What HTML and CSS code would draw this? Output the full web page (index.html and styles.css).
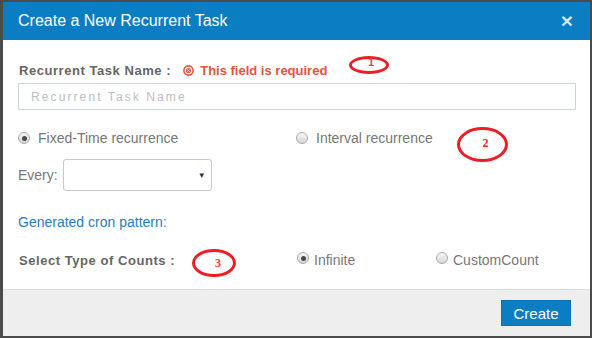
FILE: index.html
```html
<!DOCTYPE html>
<html lang="en">
<head>
    <meta charset="UTF-8">
    <meta name="viewport" content="width=device-width, initial-scale=1.0">
    <title>Create a New Recurrent Task</title>
    <link rel="stylesheet" href="styles.css">
</head>
<body>
    <div class="modal">
        <div class="modal-header">
            <span class="modal-title">Create a New Recurrent Task</span>
            <span class="close">&times;</span>
        </div>
        <div class="modal-body">
            <div class="name-row">
                <label class="bold-label">Recurrent Task Name :</label>
                <span class="error">
                    <svg width="11" height="11" viewBox="0 0 11 11">
                        <circle cx="5.5" cy="5.5" r="4.6" fill="none" stroke="#e5533f" stroke-width="1.6"/>
                        <circle cx="5.5" cy="5.5" r="2.6" fill="#e5533f"/>
                        <path d="M4.4 4.4 L6.6 6.6 M6.6 4.4 L4.4 6.6" stroke="#fff" stroke-width="0.9"/>
                    </svg>
                    This field is required
                </span>
            </div>
            <input type="text" class="text-input" placeholder="Recurrent Task Name">
            <div class="two-col radio-row">
                <div class="radio"><span class="dot checked"></span>Fixed-Time recurrence</div>
                <div class="radio"><span class="dot"></span>Interval recurrence</div>
            </div>
            <div class="every-row">
                <span class="plain-label">Every:</span>
                <div class="select"><span class="arrow">&#9660;</span></div>
            </div>
            <div class="cron">Generated cron pattern:</div>
            <div class="two-col counts-row">
                <label class="bold-label">Select Type of Counts :</label>
                <div class="count-options">
                    <div class="radio small"><span class="dot checked"></span>Infinite</div>
                    <div class="radio small"><span class="dot"></span>CustomCount</div>
                </div>
            </div>
        </div>
        <div class="modal-footer">
            <button class="btn-create">Create</button>
        </div>
    </div>

    <!-- annotations drawn over the screenshot -->
    <div class="mark mark-1"><span class="num n1">1</span></div>
    <div class="mark mark-2"><span class="num n2">2</span></div>
    <div class="mark mark-3"><span class="num n3">3</span></div>
</body>
</html>
```

FILE: styles.css
```css
body {
    margin: 0;
    background-color: #4b4b4b;
    font-family: "Liberation Sans", Arial, sans-serif;
    width: 592px;
    height: 338px;
    overflow: hidden;
}
.modal {
    margin: 2px 2px 0 3px;
    width: 587px;
    height: 334px;
    background-color: #fff;
    display: flex;
    flex-direction: column;
}
.modal-header {
    height: 38px;
    background-color: #0b7ec3;
    display: flex;
    align-items: center;
    justify-content: space-between;
    padding: 0 17px 0 15px;
}
.modal-title {
    color: #fff;
    font-size: 16px;
}
.close {
    color: rgba(255, 255, 255, 0.82);
    font-size: 21px;
    font-weight: bold;
    line-height: 1;
    margin-top: -2px;
}
.modal-body {
    flex: 1;
    padding: 22px 14px 0 16px;
}
.name-row {
    display: flex;
    align-items: center;
    height: 16px;
}
.bold-label {
    font-size: 13px;
    font-weight: bold;
    color: #666;
    letter-spacing: 0.55px;
}
.error {
    margin-left: 12px;
    color: #e5533f;
    font-size: 13px;
    font-weight: bold;
    display: flex;
    align-items: center;
    gap: 6px;
}
.text-input {
    display: block;
    box-sizing: border-box;
    margin-top: 5px;
    margin-left: -1px;
    width: 558px;
    height: 27px;
    border: 1px solid #cdd6de;
    padding: 0 12px;
    font-family: inherit;
    font-size: 12px;
    letter-spacing: 2.1px;
}
.text-input::placeholder {
    color: #bdbdbd;
}
.two-col {
    display: grid;
    grid-template-columns: 278px 1fr;
    align-items: center;
}
.radio-row {
    margin-top: 20px;
    height: 16px;
    margin-left: -1px;
}
.radio {
    display: flex;
    align-items: center;
    font-size: 14px;
    color: #777;
}
.dot {
    box-sizing: border-box;
    width: 12px;
    height: 12px;
    border-radius: 50%;
    border: 1px solid #a9a9a9;
    background: linear-gradient(#f6f6f6, #d6d6d6);
    margin-right: 8px;
    display: flex;
    align-items: center;
    justify-content: center;
}
.dot.checked::after {
    content: "";
    width: 5px;
    height: 5px;
    border-radius: 50%;
    background-color: #4a4a4a;
}
.radio.small .dot {
    margin-right: 5px;
    margin-top: -4px;
}
.every-row {
    margin-top: 13px;
    margin-left: -1px;
    display: flex;
    align-items: center;
}
.plain-label {
    font-size: 14px;
    color: #777;
    margin-right: 5px;
}
.select {
    box-sizing: border-box;
    width: 149px;
    height: 32px;
    border: 1px solid #c8c8c8;
    border-radius: 3px;
    display: flex;
    align-items: center;
    justify-content: flex-end;
    padding-right: 5px;
}
.arrow {
    font-size: 8px;
    color: #333;
}
.cron {
    margin-top: 23px;
    margin-left: -1px;
    font-size: 14px;
    color: #1f7dc1;
    line-height: 16px;
}
.counts-row {
    margin-top: 22px;
    height: 16px;
    grid-template-columns: 278px 1fr;
}
.count-options {
    display: grid;
    grid-template-columns: 139px 1fr;
}
.modal-footer {
    height: 46px;
    border-top: 1px solid #dedede;
    background-color: #eee;
    display: flex;
    align-items: center;
    justify-content: flex-end;
    padding-right: 19px;
}
.btn-create {
    width: 70px;
    height: 26px;
    border: 1px solid #0a72b2;
    background-color: #0b7ec3;
    color: #fff;
    font-family: inherit;
    font-size: 15px;
    padding: 0;
}
.mark {
    position: absolute;
    box-sizing: border-box;
    border: 3.5px solid #ee1c24;
    border-radius: 50%;
    display: flex;
    align-items: center;
    justify-content: center;
}
.mark-1 {
    left: 349px;
    top: 56px;
    width: 40px;
    height: 18px;
}
.mark-2 {
    left: 457px;
    top: 127px;
    width: 51px;
    height: 35px;
}
.mark-3 {
    left: 192px;
    top: 249px;
    width: 44px;
    height: 28px;
}
.num {
    font-family: "Liberation Serif", serif;
    font-size: 12px;
    line-height: 1;
}
.n1 {
    color: #e83a6e;
    font-family: "Liberation Sans", sans-serif;
    font-size: 11px;
    font-weight: bold;
    margin-top: -6px;
    margin-left: 4px;
}
.n2 {
    color: #ee1c24;
    font-weight: bold;
    margin-top: -3px;
    margin-left: 6px;
}
.n3 {
    color: #f0442a;
    font-weight: bold;
    margin-left: 8px;
    margin-top: -1px;
}
```
